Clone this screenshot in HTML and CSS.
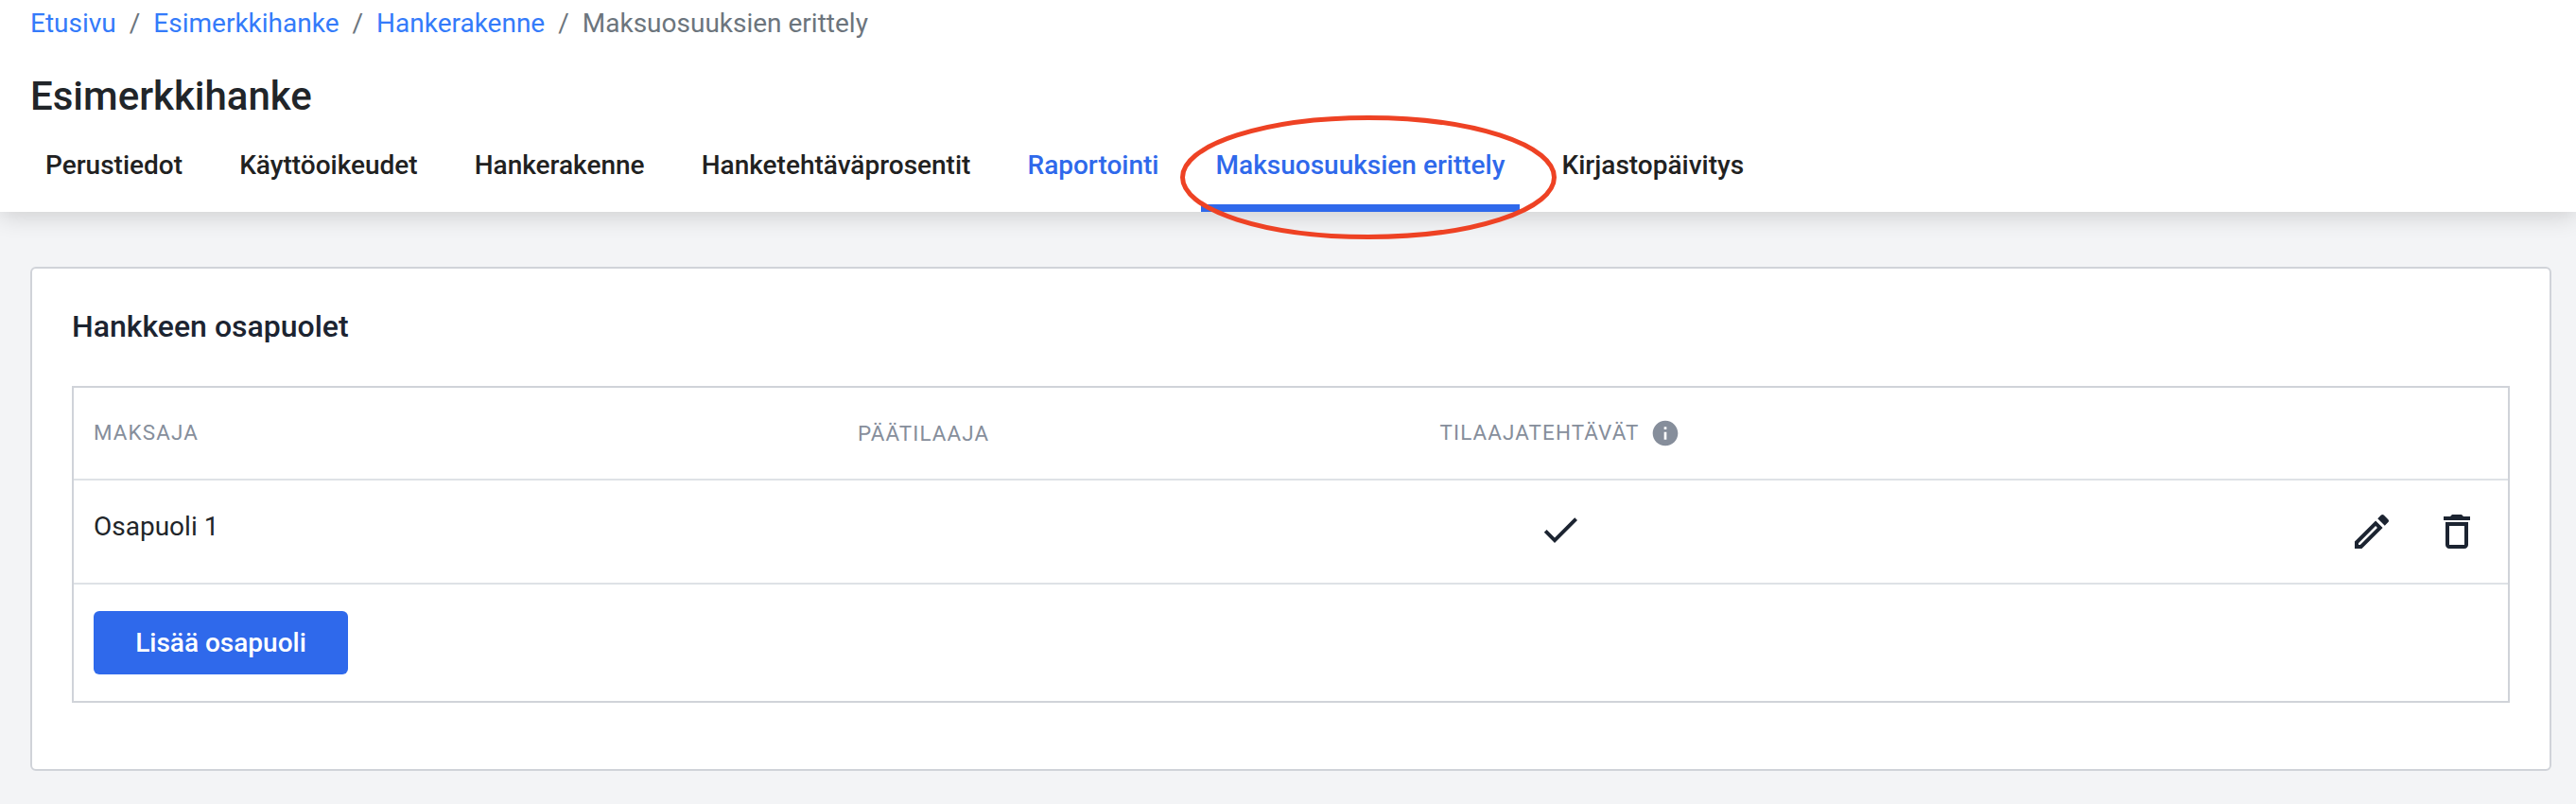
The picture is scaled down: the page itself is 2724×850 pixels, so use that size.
FILE: index.html
```html
<!DOCTYPE html>
<html lang="fi">

<head>
    <meta charset="UTF-8">
    <title>Maksuosuuksien erittely</title>
    <link rel="stylesheet" href="styles.css">
</head>

<body>
    <header class="header">
        <nav class="breadcrumb">
            <a href="#">Etusivu</a>
            <span>/</span>
            <a href="#">Esimerkkihanke</a>
            <span>/</span>
            <a href="#">Hankerakenne</a>
            <span>/</span>
            <span>Maksuosuuksien erittely</span>
        </nav>

        <h1>Esimerkkihanke</h1>

        <nav class="tabs">
            <a href="#">Perustiedot</a>
            <a href="#">Käyttöoikeudet</a>
            <a href="#">Hankerakenne</a>
            <a href="#">Hanketehtäväprosentit</a>
            <a href="#" class="blue">Raportointi</a>
            <a href="#" class="blue active">Maksuosuuksien erittely
                <svg class="ring" viewBox="0 0 398 131">
                    <ellipse cx="199" cy="65.5" rx="196.5" ry="63" />
                </svg>
            </a>
            <a href="#">Kirjastopäivitys</a>
        </nav>
    </header>

    <main class="card">
        <h2>Hankkeen osapuolet</h2>

        <div class="table">
            <div class="row head">
                <div class="payer">Maksaja</div>
                <div>Päätilaaja</div>
                <div class="center">
                    <span class="payer">Tilaajatehtävät</span>
                    <svg class="info" viewBox="0 0 24 24">
                        <path d="M12 2C6.48 2 2 6.48 2 12s4.48 10 10 10 10-4.48 10-10S17.52 2 12 2zm1 15h-2v-6h2v6zm0-8h-2V7h2v2z" />
                    </svg>
                </div>
                <div></div>
            </div>

            <div class="row item">
                <div class="name">Osapuoli 1</div>
                <div></div>
                <div class="center">
                    <svg class="icon" viewBox="0 0 24 24">
                        <path d="M9 16.2L4.8 12l-1.4 1.4L9 19 21 7l-1.4-1.4L9 16.2z" />
                    </svg>
                </div>
                <div class="actions">
                    <svg class="icon" viewBox="0 0 24 24">
                        <path d="M14.06 9.02l.92.92L5.92 19H5v-.92l9.06-9.06M17.66 3c-.25 0-.51.1-.7.29l-1.83 1.83 3.75 3.75 1.83-1.83c.39-.39.39-1.02 0-1.41l-2.34-2.34c-.2-.2-.45-.29-.71-.29zm-3.6 3.19L3 17.25V21h3.75L17.81 9.94l-3.75-3.75z" />
                    </svg>
                    <svg class="icon" viewBox="0 0 24 24">
                        <path d="M6 19c0 1.1.9 2 2 2h8c1.1 0 2-.9 2-2V7H6v12zM8 9h8v10H8V9zm7.5-5l-1-1h-5l-1 1H5v2h14V4h-3.5z" />
                    </svg>
                </div>
            </div>

            <div class="foot">
                <button>Lisää osapuoli</button>
            </div>
        </div>
    </main>
</body>

</html>
```
FILE: styles.css
```css
* {
    box-sizing: border-box;
    padding: 0;
    margin: 0;
}

body {
    height: 850px;
    overflow: hidden;
    background: #f3f4f6;
    color: #212529;
    font-family: Roboto, sans-serif;
    font-size: 28px;
}

a {
    text-decoration: none;
}

.header {
    height: 224px;
    padding: 4px 32px 0;
    background: white;
    box-shadow: 0 4px 24px rgba(0, 0, 0, 0.16);
}

.breadcrumb {
    display: flex;
    gap: 14px;
    line-height: 42px;
    color: #6c757d;
}

.breadcrumb a {
    color: #347bfa;
}

h1 {
    margin-top: 31px;
    font-size: 42px;
    font-weight: 500;
    line-height: 50px;
}

.tabs {
    display: flex;
    gap: 28.1px;
    height: 97px;
}

.tabs a {
    position: relative;
    padding: 28px 16px 0;
    color: #212121;
    font-weight: 500;
    line-height: 40px;
}

.tabs .blue {
    color: #2f69eb;
}

.tabs .active {
    border-bottom: 8px solid #2f69eb;
}

/* red marker drawn over the active tab */
.ring {
    position: absolute;
    left: -22px;
    top: -5px;
    width: 398px;
    height: 131px;
    fill: none;
    stroke: #ee4224;
    stroke-width: 5;
}

.card {
    height: 533px;
    margin: 58px 26px 0 32px;
    padding: 0 42px;
    background: white;
    border: 2px solid #d0d3d9;
    border-radius: 6px;
}

h2 {
    padding-top: 41px;
    color: #1c2431;
    font-size: 32px;
    font-weight: 500;
    line-height: 40px;
}

.table {
    height: 335px;
    margin-top: 43px;
    border: 2px solid #d0d3d9;
}

.row {
    display: grid;
    grid-template-columns: 808px 438px 610px 1fr;
    padding: 0 21px;
    border-bottom: 2px solid #dee2e6;
}

.head {
    height: 98px;
    align-items: center;
    color: #868e9b;
    font-size: 22.4px;
    letter-spacing: 0.05em;
    text-transform: uppercase;
}

.payer {
    padding-bottom: 2px;
}

.item {
    height: 110px;
}

.center {
    display: flex;
    justify-content: center;
    align-items: center;
}

.info {
    width: 32px;
    height: 32px;
    margin-left: 12px;
    fill: #868e9b;
}

.name {
    padding-top: 28px;
    line-height: 42px;
}

.icon {
    width: 48px;
    height: 48px;
    fill: #1c2431;
}

.item .center {
    padding-bottom: 4px;
}

.actions {
    display: flex;
    justify-content: flex-end;
    gap: 42px;
    padding-top: 30px;
    padding-right: 9px;
}

.foot {
    padding: 28px 21px;
}

button {
    width: 269px;
    height: 67px;
    border: none;
    border-radius: 6px;
    background: #2f69eb;
    color: white;
    font-family: inherit;
    font-size: 28px;
    font-weight: 500;
}
```
